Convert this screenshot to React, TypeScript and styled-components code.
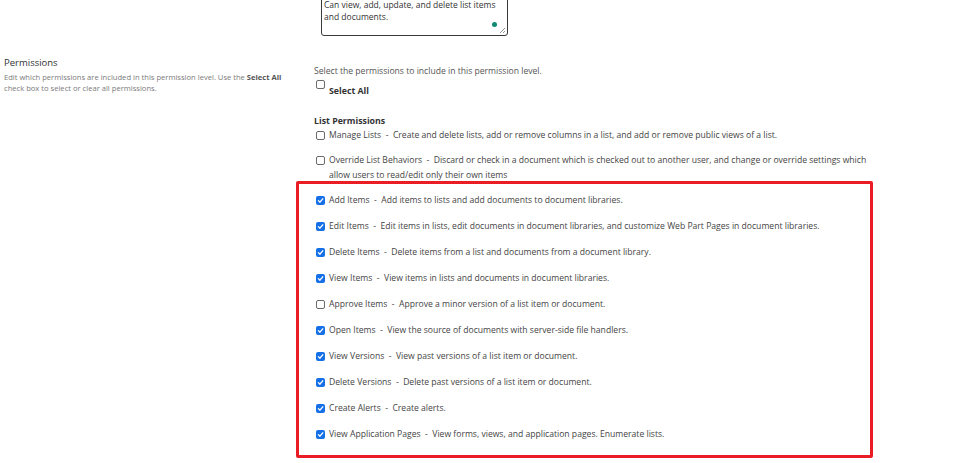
import React from "react";
import styled, { createGlobalStyle } from "styled-components";

const Global = createGlobalStyle`
  html, body { margin: 0; padding: 0; background: #fff; }
  body { font-family: "Open Sans", "Noto Sans", sans-serif; color: #333; overflow: hidden; }
`;

const Page = styled.div`
  width: 975px;
  height: 463px;
  overflow: hidden;
`;

const TopRow = styled.div`
  padding-left: 321px;
  margin-top: -22px;
`;

const TextArea = styled.div`
  position: relative;
  box-sizing: border-box;
  width: 187px;
  height: 58px;
  border: 1.5px solid #3a3a3a;
  border-radius: 3px;
  padding: 20px 4px 0 2px;
  font-size: 8.5px;
  line-height: 12px;
  color: #333;
  white-space: nowrap;
`;

const Dot = styled.span`
  position: absolute;
  right: 10px;
  bottom: 8px;
  width: 5px;
  height: 5px;
  border-radius: 50%;
  background: #108a74;
`;

const Grip = styled.svg`
  position: absolute;
  right: 1px;
  bottom: 1px;
`;

const Section = styled.div`
  display: grid;
  grid-template-columns: 314px 1fr;
  margin-top: 20px;
`;

const Left = styled.div`
  padding-left: 4px;
`;

const SectionTitle = styled.div`
  font-size: 9.5px;
  line-height: 13px;
  color: #333;
`;

const SectionDesc = styled.div`
  margin-top: 3px;
  font-size: 7.6px;
  line-height: 11px;
  color: #7a7a7a;
  width: 290px;
  b { color: #555; font-weight: 700; }
`;

const Right = styled.div`
  padding-top: 9px;
`;

const Intro = styled.div`
  font-size: 8.6px;
  line-height: 12px;
  color: #555;
`;

const SelectAllRow = styled.div`
  display: flex;
  align-items: flex-start;
  gap: 4px;
  padding-left: 2px;
  margin-top: 0;
  height: 22px;
`;

const SelectAllLabel = styled.span`
  font-size: 8.8px;
  font-weight: 700;
  color: #333;
  margin-top: 8px;
`;

const GroupTitle = styled.div`
  margin-top: 16px;
  font-size: 8.8px;
  font-weight: 700;
  line-height: 12px;
  color: #333;
`;

const List = styled.div`
  margin-top: 1px;
`;

const PlainGroup = styled.div`
  padding-left: 2px;
  & > div { margin-bottom: 10px; }
  & > div:last-child { margin-bottom: 0; }
`;

const Highlight = styled.div`
  box-sizing: border-box;
  width: 577px;
  margin-left: -18px;
  margin-top: -2px;
  border: 3px solid #ea1c24;
  border-radius: 2px;
  padding: 9px 0 13px 17px;
`;

const Row = styled.div`
  display: flex;
  align-items: flex-start;
  gap: 4px;
  margin-bottom: 11px;
  &:last-child { margin-bottom: 0; }
`;

const RowText = styled.span`
  font-size: 8.6px;
  line-height: 15px;
  color: #444;
  width: 540px;
  white-space: pre-wrap;
`;

const Box = styled.span<{ $checked?: boolean }>`
  flex: none;
  box-sizing: border-box;
  width: 9px;
  height: 9px;
  margin-top: 3px;
  border-radius: 2px;
  border: ${(p) => (p.$checked ? "none" : "1px solid #6b6b6b")};
  background: ${(p) => (p.$checked ? "#1570e8" : "#fff")};
  display: flex;
  align-items: center;
  justify-content: center;
`;

const Check: React.FC<{ checked?: boolean }> = ({ checked }) => (
  <Box $checked={checked}>
    {checked && (
      <svg width="7" height="7" viewBox="0 0 10 10">
        <path d="M2 5.2 L4.2 7.4 L8.2 2.6" fill="none" stroke="#fff" strokeWidth="1.9" strokeLinecap="round" strokeLinejoin="round" />
      </svg>
    )}
  </Box>
);

const Perm: React.FC<{ name: string; desc: string; checked?: boolean }> = ({ name, desc, checked }) => (
  <Row>
    <Check checked={checked} />
    <RowText>{`${name}  -  ${desc}`}</RowText>
  </Row>
);

const highlighted = [
  { name: "Add Items", desc: "Add items to lists and add documents to document libraries.", checked: true },
  { name: "Edit Items", desc: "Edit items in lists, edit documents in document libraries, and customize Web Part Pages in document libraries.", checked: true },
  { name: "Delete Items", desc: "Delete items from a list and documents from a document library.", checked: true },
  { name: "View Items", desc: "View items in lists and documents in document libraries.", checked: true },
  { name: "Approve Items", desc: "Approve a minor version of a list item or document.", checked: false },
  { name: "Open Items", desc: "View the source of documents with server-side file handlers.", checked: true },
  { name: "View Versions", desc: "View past versions of a list item or document.", checked: true },
  { name: "Delete Versions", desc: "Delete past versions of a list item or document.", checked: true },
  { name: "Create Alerts", desc: "Create alerts.", checked: true },
  { name: "View Application Pages", desc: "View forms, views, and application pages. Enumerate lists.", checked: true },
];

export default function App() {
  return (
    <Page>
      <Global />
      <TopRow>
        <TextArea>
          Can view, add, update, and delete list items
          <br />
          and documents.
          <Dot />
          <Grip width="7" height="7" viewBox="0 0 7 7">
            <path d="M6 1 L1 6 M6 4 L4 6" stroke="#777" strokeWidth="0.8" />
          </Grip>
        </TextArea>
      </TopRow>
      <Section>
        <Left>
          <SectionTitle>Permissions</SectionTitle>
          <SectionDesc>
            Edit which permissions are included in this permission level. Use the <b>Select All</b> check box to select or clear all permissions.
          </SectionDesc>
        </Left>
        <Right>
          <Intro>Select the permissions to include in this permission level.</Intro>
          <SelectAllRow>
            <Check />
            <SelectAllLabel>Select All</SelectAllLabel>
          </SelectAllRow>
          <GroupTitle>List Permissions</GroupTitle>
          <List>
            <PlainGroup>
              <Perm name="Manage Lists" desc="Create and delete lists, add or remove columns in a list, and add or remove public views of a list." />
              <Perm name="Override List Behaviors" desc="Discard or check in a document which is checked out to another user, and change or override settings which allow users to read/edit only their own items" />
            </PlainGroup>
            <Highlight>
              {highlighted.map((p) => (
                <Perm key={p.name} {...p} />
              ))}
            </Highlight>
          </List>
        </Right>
      </Section>
    </Page>
  );
}
